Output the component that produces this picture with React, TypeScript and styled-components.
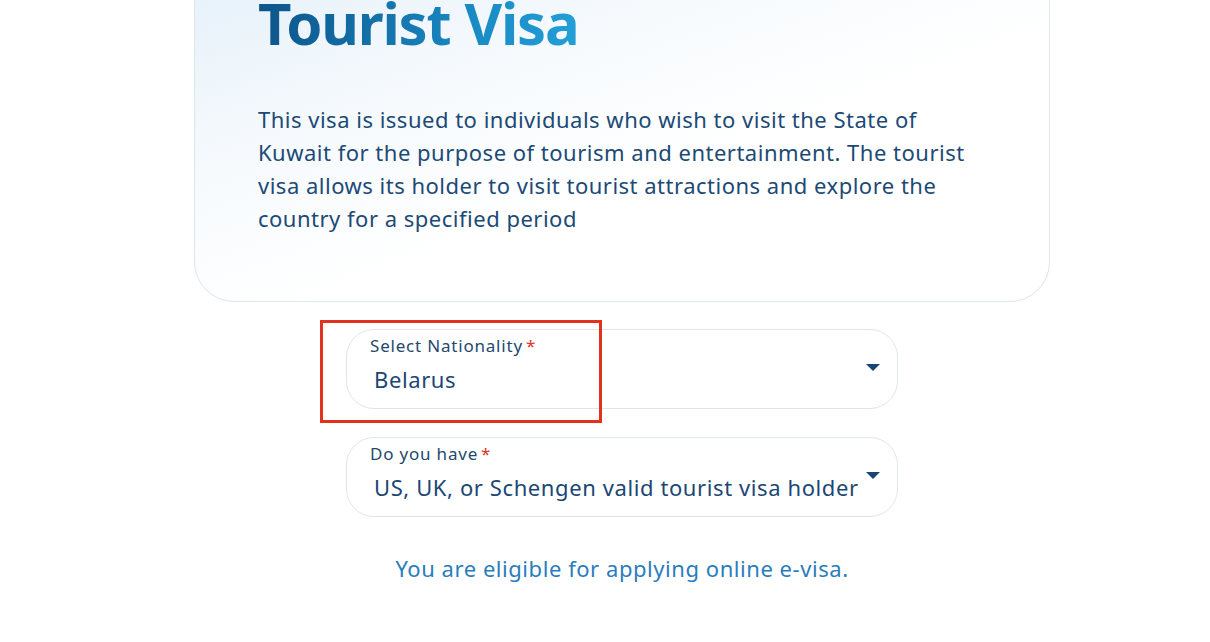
import * as React from "react";
import styled, { createGlobalStyle } from "styled-components";

const Global = createGlobalStyle`
  html, body {
    margin: 0;
    padding: 0;
    background: #ffffff;
    font-family: "Noto Sans", "Open Sans", sans-serif;
    overflow: hidden;
  }
`;

const Page = styled.div`
  width: 1210px;
  height: 642px;
  display: flex;
  flex-direction: column;
  align-items: center;
  padding-left: 34px;
  box-sizing: border-box;
`;

const Card = styled.section`
  width: 856px;
  box-sizing: border-box;
  margin-top: -60px;
  padding: 46px 64px 66px 63px;
  border: 1px solid #dbe6ee;
  border-radius: 40px;
  background: linear-gradient(160deg, #e3eff9 0%, #f6fafd 35%, #ffffff 60%);
`;

const Title = styled.h1`
  margin: 0;
  font-size: 58px;
  line-height: 72px;
  font-weight: 700;
  letter-spacing: -1.2px;
  background: linear-gradient(90deg, #0d548a 0%, #1a8cc6 70%, #239fd8 100%);
  -webkit-background-clip: text;
  background-clip: text;
  color: transparent;
  display: inline-block;
`;

const Description = styled.p`
  margin: 44px 0 0;
  max-width: 712px;
  font-size: 22px;
  line-height: 33px;
  letter-spacing: 0.5px;
  color: #1c4a76;
`;

const Fields = styled.div`
  display: flex;
  flex-direction: column;
  gap: 28px;
  margin-top: 27px;
`;

const Field = styled.div`
  position: relative;
  width: 552px;
  height: 80px;
  box-sizing: border-box;
  border: 1px solid #dbe7ef;
  border-radius: 28px;
  background: #fff;
  padding: 5px 40px 0 23px;
  display: flex;
  flex-direction: column;
`;

const Label = styled.label`
  font-size: 17px;
  line-height: 22px;
  letter-spacing: 0.8px;
  color: #24496d;
`;

const Required = styled.span`
  color: #e0352b;
  margin-left: 3px;
`;

const Value = styled.div`
  margin-top: 7px;
  padding-left: 4px;
  font-size: 22px;
  line-height: 30px;
  letter-spacing: 0.6px;
  color: #1b4775;
  white-space: nowrap;
`;

const Caret = styled.span<{ $top: number }>`
  position: absolute;
  right: 17px;
  top: ${(p) => p.$top}px;
  width: 0;
  height: 0;
  border-left: 7px solid transparent;
  border-right: 7px solid transparent;
  border-top: 7px solid #174673;
`;

const Highlight = styled.div`
  position: absolute;
  left: -27px;
  top: -10px;
  width: 282px;
  height: 103px;
  box-sizing: border-box;
  border: 3px solid #e2311d;
  pointer-events: none;
`;

const Eligible = styled.p`
  margin: 36px 0 0;
  font-size: 22px;
  line-height: 30px;
  letter-spacing: 0.55px;
  color: #2a7dbd;
  text-align: center;
`;

export default function App() {
  return (
    <>
      <Global />
      <Page>
        <Card>
          <Title>Tourist Visa</Title>
          <Description>
            This visa is issued to individuals who wish to visit the State of
            Kuwait for the purpose of tourism and entertainment. The tourist
            visa allows its holder to visit tourist attractions and explore the
            country for a specified period
          </Description>
        </Card>
        <Fields>
          <Field>
            <Label>
              Select Nationality<Required>*</Required>
            </Label>
            <Value>Belarus</Value>
            <Caret $top={34} />
            <Highlight />
          </Field>
          <Field>
            <Label>
              Do you have<Required>*</Required>
            </Label>
            <Value>US, UK, or Schengen valid tourist visa holder</Value>
            <Caret $top={34} />
          </Field>
        </Fields>
        <Eligible>You are eligible for applying online e-visa.</Eligible>
      </Page>
    </>
  );
}
